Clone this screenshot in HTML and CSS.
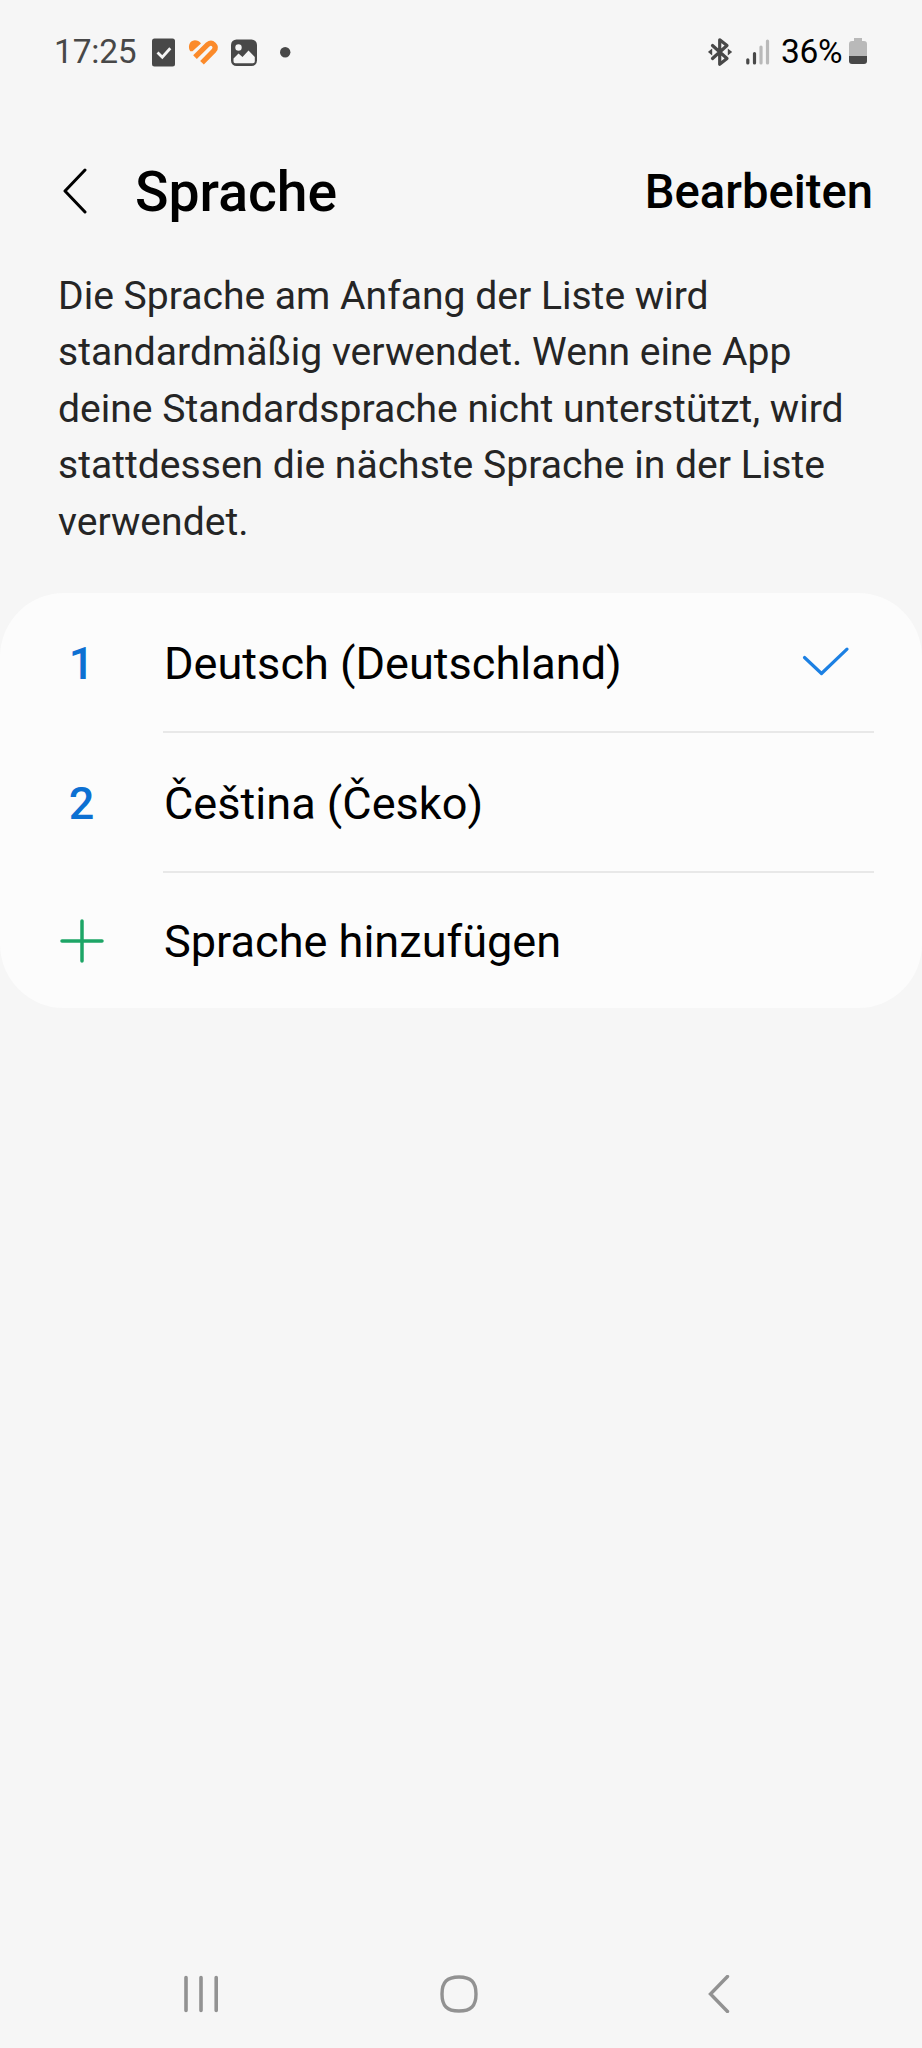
FILE: index.html
```html
<!DOCTYPE html>
<html lang="de">
<head>
<meta charset="utf-8">
<title>Sprache</title>
<link rel="stylesheet" href="styles.css">
</head>
<body>
<div class="screen">
  <div class="status">
    <span class="time">17:25</span>
    <svg class="notifications" width="150" height="40" viewBox="0 0 150 40">
      <rect x="2" y="6.500" width="23" height="28" rx="2.500" fill="#484848"/>
      <path d="M7.500 20.500l4.800 4.800 8-9" fill="none" stroke="#f5f5f5" stroke-width="2.800"/>
      <path d="M40.300 19.200C37.500 15.500 39 8.500 44.800 8.300c2.600 0 4.600 1.200 6.200 3.200L42.500 19.300z" fill="#fb8a2a"/>
      <path d="M45 25.200L57.800 12.500q3.200-2.700 6 0t.2 6L52 30.700" fill="none" stroke="#fb8a2a" stroke-width="5.200"/>
      <rect x="81" y="7.500" width="26" height="26.500" rx="5.500" fill="#484848"/>
      <circle cx="88.500" cy="15.500" r="3.200" fill="#f5f5f5"/>
      <path d="M83.500 26.500l5-5 4 3.500 6-6.500 6.300 6.500v4.500q0 1.800-1.800 1.800H85.300q-1.800 0-1.800-1.800z" fill="#f5f5f5"/>
      <circle cx="135.200" cy="20.300" r="5.200" fill="#484848"/>
    </svg>
    <svg class="radio" width="66" height="40" viewBox="0 0 66 40">
      <path d="M4.500 13.500L19 26.500l-7.300 5.700V7.800l7.300 5.700L4.500 26.500" fill="none" stroke="#484848" stroke-width="3.200" stroke-linejoin="round" stroke-linecap="round"/>
      <path d="M.8 20l2.800-2.300v4.600zM23.200 20l-2.800-2.300v4.600z" fill="#484848" stroke="#484848" stroke-width="1.200"/>
      <g stroke-width="3.200" stroke-linecap="round">
        <path d="M39.800 27.800v3.200M46.500 21.500v9.500" stroke="#484848"/>
        <path d="M53 15v16M59.500 9v22" stroke="#b9b9b9"/>
      </g>
    </svg>
    <span class="percent">36%</span>
    <svg class="battery" width="18" height="40" viewBox="0 0 18 40">
      <path d="M5 6h8v3h2q3 0 3 3v12H0V12q0-3 3-3h2z" fill="#b9b9b9"/>
      <path d="M0 24h18v5q0 3-3 3H3q-3 0-3-3z" fill="#484848"/>
    </svg>
  </div>
  <header class="header">
    <svg class="back" width="24" height="46" viewBox="0 0 24 46"><path d="M22 2L2 23l20 21" fill="none" stroke="#000" stroke-width="3" stroke-linecap="round" stroke-linejoin="round"/></svg>
    <h1 class="title">Sprache</h1>
    <span class="action">Bearbeiten</span>
  </header>
  <p class="intro">Die Sprache am Anfang der Liste wird<br>standardmäßig verwendet. Wenn eine App<br>deine Standardsprache nicht unterstützt, wird<br>stattdessen die nächste Sprache in der Liste<br>verwendet.</p>
  <main class="card">
    <div class="row">
      <span class="lead">1</span>
      <div class="body"><span class="label">Deutsch (Deutschland)</span>
        <svg class="check" width="48" height="32" viewBox="0 0 48 32"><path d="M2.500 11.500L19.500 27.500 45 3.200" fill="none" stroke="#1c80e3" stroke-width="3.200" stroke-linecap="round" stroke-linejoin="round"/></svg>
      </div>
    </div>
    <div class="row">
      <span class="lead">2</span>
      <div class="body"><span class="label">Čeština (Česko)</span></div>
    </div>
    <div class="row row-add">
      <span class="lead"><svg class="plus" width="44" height="44" viewBox="0 0 44 44"><path d="M22 2v40M2 22h40" stroke="#1da566" stroke-width="3.500" stroke-linecap="round"/></svg></span>
      <div class="body"><span class="label">Sprache hinzufügen</span></div>
    </div>
  </main>
  <nav class="nav">
    <svg width="36" height="38" viewBox="0 0 36 38"><path d="M3 2.500v33M18 2.500v33M33.200 2.500v33" stroke="#929292" stroke-width="3.600" stroke-linecap="round"/></svg>
    <svg class="home" width="38" height="38" viewBox="0 0 38 38"><path d="M19 2C31 2 36 7 36 19S31 36 19 36 2 31 2 19 7 2 19 2z" fill="none" stroke="#929292" stroke-width="3.400"/></svg>
    <svg width="22" height="38" viewBox="0 0 22 38"><path d="M19.500 1.500L2.500 19l17 17.500" fill="none" stroke="#929292" stroke-width="3.400" stroke-linecap="round"/></svg>
  </nav>
</div>
</body>
</html>
```
FILE: styles.css
```css
* { box-sizing: border-box; }
body { margin: 0; background: #f6f6f6; font-family: Roboto, sans-serif; color: #000; }
svg { display: block; flex: none; }
.screen { height: 2048px; display: flex; flex-direction: column; }
.status { height: 104px; padding-left: 54px; display: flex; align-items: center; font-size: 33.5px; line-height: 40px; white-space: nowrap; }
.time { width: 96px; color: #484848; letter-spacing: -0.2px; }
.radio { margin-left: 408px; }
.percent { width: 68px; margin-left: 7px; letter-spacing: -0.3px; }
.header { height: 163px; padding: 12px 49px 0 63px; display: flex; align-items: center; }
.back { margin-bottom: 14px; margin-top: 12px; }
.title { margin: 2px 0 0 48px; font-size: 55.3px; line-height: 70px; font-weight: 500; }
.action { margin-left: auto; font-size: 47.2px; line-height: 60px; font-weight: 500; }
.intro { margin: 0; padding: 1px 0 0 58px; height: 326px; font-size: 39.1px; line-height: 56.4px; color: #252525; white-space: nowrap; }
.card { background: #fcfcfc; border-radius: 64px; height: 415px; }
.row { height: 140px; display: flex; }
.row-add { height: 135px; }
.lead { width: 163px; padding-top: 1px; display: flex; align-items: center; justify-content: center; font-size: 45px; font-weight: 500; color: #0d70d2; }
.body { width: 711px; padding-right: 24px; border-bottom: 2.500px solid #e8e8e8; display: flex; align-items: center; justify-content: space-between; }
.row-add .body { border: 0; }
.label { padding: 3px 0 0 1px; font-size: 45.1px; line-height: 60px; white-space: nowrap; }
.nav { margin-top: auto; height: 108px; padding: 0 192px 0 183px; display: flex; align-items: center; justify-content: space-between; }
.home { margin-right: 10px; }
```
